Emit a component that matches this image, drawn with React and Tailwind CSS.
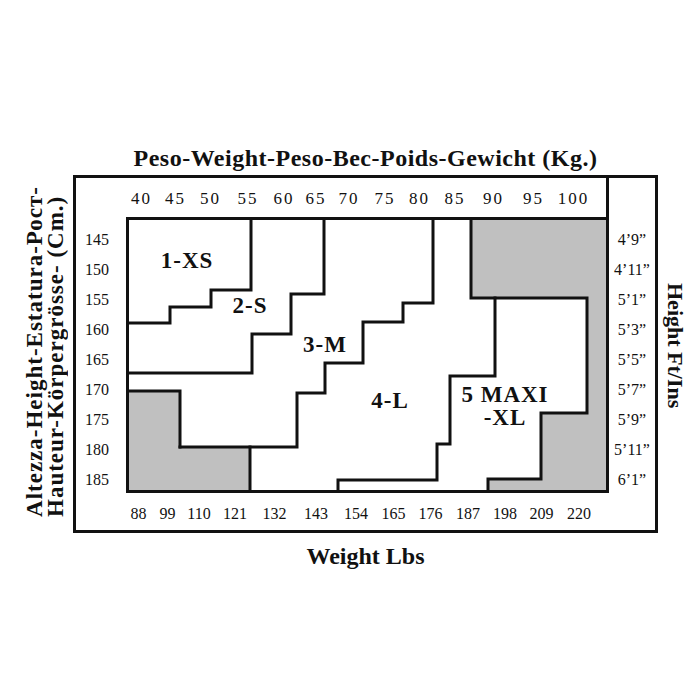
const kg = [
  ["40", "w-[35px]"], ["45", "w-[33px]"], ["50", "w-[37px]"], ["55", "w-[38px]"],
  ["60", "w-[34px]"], ["65", "w-[30px]"], ["70", "w-[36px]"], ["75", "w-[36px]"],
  ["80", "w-[33px]"], ["85", "w-[38px]"], ["90", "w-[39px]"], ["95", "w-[41px]"],
  ["100", "w-[39px]"],
]

const lbs = [
  ["88", "w-[29px]"], ["99", "w-[29px]"], ["110", "w-[34px]"], ["121", "w-[38px]"],
  ["132", "w-[41px]"], ["143", "w-[42px]"], ["154", "w-[38px]"], ["165", "w-[37px]"],
  ["176", "w-[37px]"], ["187", "w-[38px]"], ["198", "w-[36px]"], ["209", "w-[37px]"],
  ["220", "w-[38px]"],
]

const cm = ["145", "150", "155", "160", "165", "170", "175", "180", "185"]
const ft = ["4’9”", "4’11”", "5’1”", "5’3”", "5’5”", "5’7”", "5’9”", "5’11”", "6’1”"]

// step lines inside the chart, chart-local coords (480 x 276)
const steps = [
  "125,0 125,73 85,73 85,90 44,90 44,106 0,106",
  "198,0 198,77 165,77 165,117 126,117 126,156 0,156",
  "307,0 307,86 277,86 277,105 237,105 237,146 199,146 199,176 171,176 171,230 54,230",
  "0,174 54,174 54,230",
  "124,230 124,276",
  "345,0 345,81 461,81 461,196 415,196 415,262 362,262 362,276",
  "369,81 369,159 324,159 324,227 311,227 311,263 212,263 212,276",
]

function Chart() {
  return (
    <div className="relative col-start-2 row-start-2">
      <svg width="480" height="276" viewBox="0 0 480 276" className="block">
        <rect x="0" y="0" width="480" height="276" fill="#fff" />
        <polygon points="0,174 54,174 54,230 124,230 124,276 0,276" fill="#c0c0c0" />
        <polygon
          points="345,0 480,0 480,276 362,276 362,262 415,262 415,196 461,196 461,81 345,81"
          fill="#c0c0c0"
        />
        <g stroke="#111" strokeWidth="3" fill="none" strokeLinecap="square">
          {steps.map((p) => (
            <polyline key={p} points={p} />
          ))}
          <line x1="0" y1="1.5" x2="480" y2="1.5" />
          <line x1="1.5" y1="0" x2="1.5" y2="276" />
          <line x1="0" y1="274.5" x2="480" y2="274.5" />
        </g>
      </svg>

      <div className="absolute inset-0 text-[23px] leading-[23px] font-bold tracking-[1px] whitespace-nowrap">
        <span className="absolute left-[61px] top-[32px] -translate-x-1/2">1-XS</span>
        <span className="absolute left-[124px] top-[77px] -translate-x-1/2">2-S</span>
        <span className="absolute left-[199px] top-[116px] -translate-x-1/2">3-M</span>
        <span className="absolute left-[264px] top-[172px] -translate-x-1/2">4-L</span>
        <span className="absolute left-[379px] top-[166px] -translate-x-1/2 text-center">
          5 MAXI
          <br />
          -XL
        </span>
      </div>
    </div>
  )
}

export default function App() {
  return (
    <div className="w-[700px] h-[700px] overflow-hidden bg-white pt-[144px] text-[#111] font-['Liberation_Serif',serif]">
      {/* Title */}
      <div className="ml-[73px] w-[585px] text-center text-[24px] leading-[28px] font-bold tracking-[0.5px] whitespace-nowrap">
        Peso-Weight-Peso-Bec-Poids-Gewicht (Kg.)
      </div>

      <div className="flex mt-[3px]">
        {/* Left label */}
        <div className="w-[73px] h-[358px] flex flex-col justify-end items-start pb-[16px] pl-[24px]">
          <div className="[writing-mode:vertical-rl] rotate-180 text-[23px] leading-[21px] font-bold tracking-[1px] whitespace-nowrap">
            Altezza-Height-Estatura-Рост-
            <br />
            Hauteur-Körpergrösse- (Cm.)
          </div>
        </div>

        {/* Frame */}
        <div className="w-[585px] h-[358px] border-[3px] border-[#111] grid grid-cols-[50px_480px_49px] grid-rows-[39px_276px_37px]">
          <div className="col-start-1 col-end-3 row-start-1 flex pl-[48px] pt-[11px] text-[17px] leading-[20px] tracking-[2px]">
            {kg.map(([t, w]) => (
              <span key={t} className={`${w} shrink-0 text-center`}>{t}</span>
            ))}
          </div>

          <div className="col-start-1 row-start-2 flex flex-col justify-between pt-[13px] pb-[3px] pl-[9px] text-[16px] leading-[20px]">
            {cm.map((t) => (
              <span key={t}>{t}</span>
            ))}
          </div>

          <Chart />

          <div className="col-start-3 row-start-1 row-end-3 border-l-[3px] border-[#111] flex flex-col justify-between items-center pt-[52px] pb-[3px] text-[16px] leading-[20px]">
            {ft.map((t) => (
              <span key={t}>{t}</span>
            ))}
          </div>

          <div className="col-start-1 col-end-4 row-start-3 flex pl-[48px] pt-[11px] text-[16px] leading-[20px]">
            {lbs.map(([t, w]) => (
              <span key={t} className={`${w} shrink-0 text-center`}>{t}</span>
            ))}
          </div>
        </div>

        {/* Right label */}
        <div className="w-[42px] pl-[6px] pt-[108px]">
          <div className="[writing-mode:vertical-rl] text-[22px] leading-[22px] font-bold whitespace-nowrap">
            Height Ft/Ins
          </div>
        </div>
      </div>

      {/* Bottom label */}
      <div className="ml-[73px] w-[585px] mt-[9px] text-center text-[24px] leading-[28px] font-bold">
        Weight Lbs
      </div>
    </div>
  )
}
